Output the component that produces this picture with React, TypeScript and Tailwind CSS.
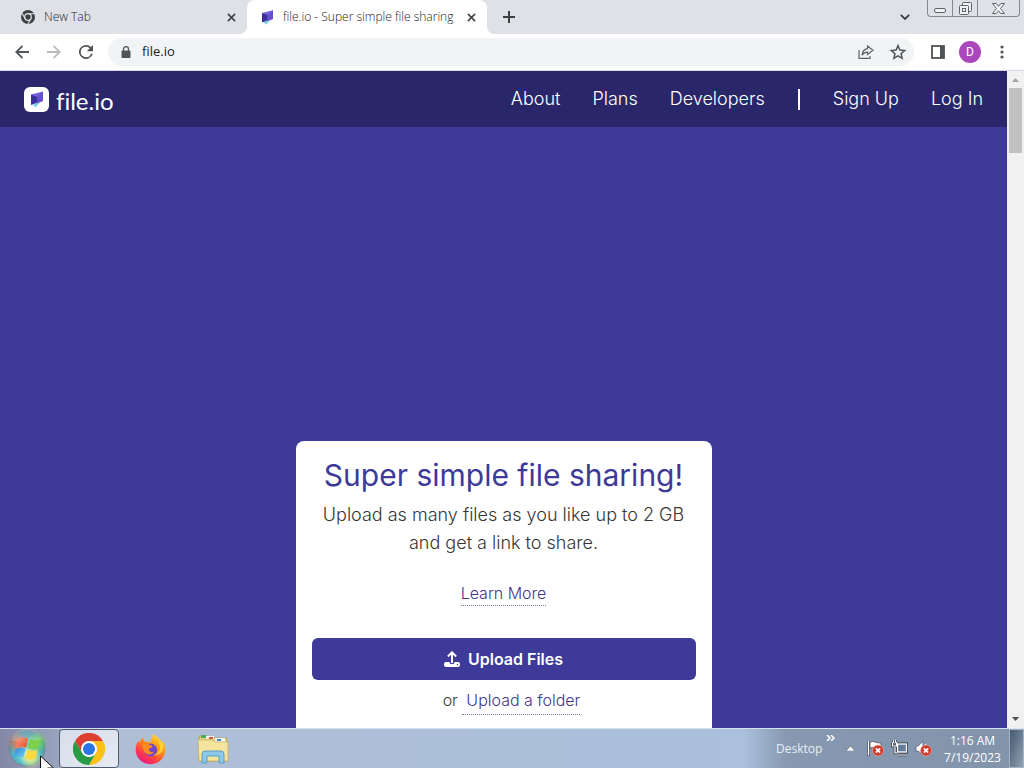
import type { ReactNode } from "react";

const ui = "font-['Open_Sans','Noto_Sans',sans-serif]";

function ChromeMark({ className = "" }: { className?: string }) {
  return (
    <svg viewBox="0 0 32 32" className={className} aria-hidden="true">
      <path d="M2.1 8A16 16 0 0 1 29.9 8H16a8 8 0 0 0-6.9 12z" fill="#dd3f31" />
      <path d="M29.9 8A16 16 0 0 1 16 32l6.9-12A8 8 0 0 0 16 8z" fill="#fbc116" />
      <path d="M16 32A16 16 0 0 1 2.1 8l7 12a8 8 0 0 0 13.800 0z" fill="#2a9a45" />
      <circle cx="16" cy="16" r="7.800" fill="#fff" />
      <circle cx="16" cy="16" r="6" fill="#2a74e4" />
    </svg>
  );
}

function ChromeMonoMark({ className = "" }: { className?: string }) {
  return (
    <svg viewBox="0 0 32 32" className={className} aria-hidden="true">
      <circle cx="16" cy="16" r="16" fill="#3c4043" />
      <circle cx="16" cy="16" r="7.500" fill="none" stroke="#dee1e6" strokeWidth="2.800" />
      <path d="M16 8.500h14M9.500 19.800l-7-12.100M22.500 19.800l-7 12.100" stroke="#dee1e6" strokeWidth="2.400" />
    </svg>
  );
}

function FileMark({ className = "" }: { className?: string }) {
  return (
    <svg viewBox="0 0 12 16" className={className} aria-hidden="true">
      <path d="M1 12l8-1-4.500 5z" fill="#7bd3ea" />
      <path d="M0 3 12 0v9.500L6 12z" fill="#7461dc" />
      <path d="M0 3 6 5.500V11l-6 2.500z" fill="#3b2f9b" />
      <path d="M6 5.500 12 0v9.500L6 11z" fill="#6350cc" />
    </svg>
  );
}

function Cross({ className = "" }: { className?: string }) {
  return (
    <svg viewBox="0 0 10 10" className={className} fill="none" stroke="#3c4043" strokeWidth="1.700" aria-hidden="true">
      <path d="M1 1l8 8M9 1 1 9" />
    </svg>
  );
}

function ToolButton({ label, children }: { label: string; children: ReactNode }) {
  return (
    <button type="button" aria-label={label} className="grid h-8 w-8 shrink-0 place-items-center">
      {children}
    </button>
  );
}

function TabStrip() {
  return (
    <div className={`${ui} flex h-[34px] shrink-0 bg-[#dee1e6] text-xs font-light text-[#202124]`}>
      <div className="flex w-[247px] items-center pr-2 pl-[21px]">
        <ChromeMonoMark className="h-[14px] w-[14px]" />
        <span className="ml-[9px] flex-1">New Tab</span>
        <button type="button" aria-label="Close New Tab" className="grid h-4 w-4 place-items-center">
          <Cross className="h-[9px] w-[9px]" />
        </button>
      </div>
      <div className="relative flex w-[240px] items-center rounded-t-lg bg-white pr-2 pl-[15px]">
        <span className="absolute bottom-0 -left-2 h-2 w-2 bg-[radial-gradient(circle_at_0_0,transparent_8px,white_8px)]" />
        <span className="absolute -right-2 bottom-0 h-2 w-2 bg-[radial-gradient(circle_at_100%_0,transparent_8px,white_8px)]" />
        <FileMark className="h-[15px] w-[11px]" />
        <span className="ml-[10px] flex-1 whitespace-nowrap">file.io - Super simple file sharing</span>
        <button type="button" aria-label="Close file.io" className="grid h-4 w-4 place-items-center">
          <Cross className="h-[9px] w-[9px]" />
        </button>
      </div>
      <button type="button" aria-label="New tab" className="ml-3 grid w-5 place-items-center">
        <svg viewBox="0 0 12 12" className="h-3 w-3" stroke="#3c4043" strokeWidth="2" aria-hidden="true">
          <path d="M6 0v12M0 6h12" />
        </svg>
      </button>
      <button type="button" aria-label="Search tabs" className="mr-3 ml-auto grid w-5 place-items-center">
        <svg viewBox="0 0 10 6" className="h-[6px] w-[10px]" fill="none" stroke="#3c4043" strokeWidth="1.800" aria-hidden="true">
          <path d="M.8.8 5 5 9.200.8" />
        </svg>
      </button>
      <div className="mr-1 flex h-[17px] w-[93px] rounded-b border border-t-0 border-[#85898f]">
        <button type="button" aria-label="Minimize" className="grid w-[25px] place-items-center border-r border-[#85898f]">
          <svg viewBox="0 0 12 12" className="h-3 w-3" fill="#f2f3f5" stroke="#5f6368" aria-hidden="true">
            <rect x=".5" y="6.500" width="11" height="4" rx="1.500" />
          </svg>
        </button>
        <button type="button" aria-label="Restore" className="grid w-[25px] place-items-center border-r border-[#85898f]">
          <svg viewBox="0 0 13 13" className="h-[13px] w-[13px]" fill="#eef0f2" stroke="#5f6368" aria-hidden="true">
            <rect x="3.500" y=".5" width="9" height="9" rx="1" />
            <rect x=".5" y="3.500" width="9" height="9" rx="1" />
            <rect x="3.500" y="6.500" width="3" height="3" />
          </svg>
        </button>
        <button type="button" aria-label="Close" className="grid flex-1 place-items-center">
          <svg viewBox="0 0 13 11" className="h-[11px] w-[13px]" fill="#f4f5f6" stroke="#5f6368" aria-hidden="true">
            <path d="M.5.5h3.700l2.300 2.800L8.800.5h3.700L8.500 5.500l4 5H8.800L6.500 7.700l-2.300 2.800H.5l4-5z" />
          </svg>
        </button>
      </div>
    </div>
  );
}

function Toolbar() {
  return (
    <div className={`${ui} flex h-[37px] shrink-0 items-center border-b border-[#d5d7e4] bg-white px-[6px]`}>
      <ToolButton label="Back">
        <svg viewBox="0 0 14 14" className="h-[14px] w-[14px]" fill="none" stroke="#505357" strokeWidth="1.800" aria-hidden="true">
          <path d="M14 7H1.500M7.500.8 1.300 7l6.200 6.200" />
        </svg>
      </ToolButton>
      <ToolButton label="Forward">
        <svg viewBox="0 0 14 14" className="h-[14px] w-[14px]" fill="none" stroke="#b9bbbe" strokeWidth="1.800" aria-hidden="true">
          <path d="M0 7h12.500M6.500.8 12.700 7l-6.200 6.200" />
        </svg>
      </ToolButton>
      <ToolButton label="Reload">
        <svg viewBox="4 4 16 16" className="h-[14px] w-[14px]" fill="#505357" aria-hidden="true">
          <path d="M17.650 6.350A8 8 0 1 0 19.730 14h-2.080A6 6 0 1 1 12 6c1.660 0 3.140.69 4.220 1.780L13 11h7V4z" />
        </svg>
      </ToolButton>
      <div className="ml-[6px] flex h-7 flex-1 items-center rounded-full bg-[#f1f3f4] pl-[13px]">
        <svg viewBox="0 0 10 13" className="h-[13px] w-[10px]" fill="#505357" aria-hidden="true">
          <rect x=".5" y="4.500" width="9" height="7.500" rx="1" />
          <path d="M2.500 5V3.200a2.500 2.500 0 0 1 5 0V5" fill="none" stroke="#505357" strokeWidth="1.300" />
        </svg>
        <input
          aria-label="Address"
          defaultValue="file.io"
          className="ml-[11px] min-w-0 flex-1 bg-transparent text-[13px] text-[#202124] outline-none"
        />
        <ToolButton label="Share">
          <svg viewBox="0 0 16 14" className="h-[14px] w-4" fill="none" stroke="#5f6368" strokeWidth="1.200" aria-hidden="true">
            <path d="M1 5v8.300h11V11M9.500 1l5.500 4.300-5.500 4.200V7.200C7 7.200 5.300 8 4 10.200c.3-3.500 2.200-6 5.500-6.600z" />
          </svg>
        </ToolButton>
        <ToolButton label="Bookmark">
          <svg viewBox="0 0 24 24" className="h-[18px] w-[18px]" fill="none" stroke="#505357" strokeWidth="2" aria-hidden="true">
            <path d="m12 3.500 2.500 5.900 6.400.6-4.800 4.200 1.400 6.200-5.500-3.300-5.500 3.300 1.400-6.200L3.100 10l6.400-.6z" />
          </svg>
        </ToolButton>
      </div>
      <div className="ml-2 flex">
        <ToolButton label="Side panel">
          <svg viewBox="0 0 14 14" className="h-[14px] w-[14px]" aria-hidden="true">
            <rect x="1" y="1" width="12" height="12" fill="#fff" stroke="#505357" strokeWidth="1.800" />
            <path d="M9 1h4v12H9z" fill="#505357" />
          </svg>
        </ToolButton>
        <ToolButton label="Profile D">
          <span className="grid h-[22px] w-[22px] place-items-center rounded-full bg-[#ab47bc] font-['Roboto',sans-serif] text-xs text-white">D</span>
        </ToolButton>
        <ToolButton label="More">
          <svg viewBox="0 0 4 14" className="h-[14px] w-1" fill="#505357" aria-hidden="true">
            <circle cx="2" cy="2" r="1.600" />
            <circle cx="2" cy="7" r="1.600" />
            <circle cx="2" cy="12" r="1.600" />
          </svg>
        </ToolButton>
      </div>
    </div>
  );
}

function SiteHeader() {
  return (
    <header className="flex h-14 shrink-0 items-center justify-between bg-[#29276a] px-6 text-white">
      <a href="#home" className="flex items-center gap-[7px]">
        <span className="grid h-[25px] w-[25px] place-items-center rounded-md bg-white">
          <FileMark className="h-[17px] w-3" />
        </span>
        <span className="pt-1 font-['Lato',sans-serif] text-2xl leading-7 font-normal [font-variant-ligatures:none]">file.io</span>
      </a>
      <nav className="flex items-center gap-8 text-lg leading-7 font-light">
        <a href="#about">About</a>
        <a href="#plans">Plans</a>
        <a href="#developers">Developers</a>
        <span className="mx-px h-[21px] w-[2px] bg-white" />
        <a href="#signup">Sign Up</a>
        <a href="#login">Log In</a>
      </nav>
    </header>
  );
}

function UploadCard() {
  return (
    <section className="w-full max-w-[416px] shrink-0 rounded-t-lg bg-white px-4 pt-[14px] pb-8 text-center font-light text-[#363636]">
      <h1 className="text-3xl leading-10 font-normal whitespace-nowrap text-[#3d3a99]">Super simple file sharing!</h1>
      <p className="mt-[6px] text-lg leading-7">
        Upload as many files as you like up to 2 GB
        <br />
        and get a link to share.
      </p>
      <a href="#more" className="mt-6 inline-block border-b border-dotted border-[#77759f] leading-6 text-[#44358c]">
        Learn More
      </a>
      <button type="button" className="mt-8 flex h-[42px] w-full items-center justify-center gap-2 rounded-md bg-[#3d3a99] font-semibold text-white">
        <svg viewBox="0 0 16 16" className="h-4 w-4" fill="none" stroke="#fff" aria-hidden="true">
          <path d="M8 12V2M3.800 5.500 8 1.300l4.200 4.200" strokeWidth="1.900" />
          <path d="M2 11h3.500c0 3 5 3 5 0H14a2 2 0 0 1 2 2v1a2 2 0 0 1-2 2H2a2 2 0 0 1-2-2v-1a2 2 0 0 1 2-2z" fill="#fff" stroke="none" />
          <circle cx="13.500" cy="13.500" r=".7" fill="#3d3a99" stroke="none" />
        </svg>
        Upload Files
      </button>
      <p className="mt-2 pl-4 leading-6">
        or{" "}
        <a href="#folder" className="inline-block border-b border-dotted border-[#77759f] pb-[2px] pl-1 text-[#44358c]">
          Upload a folder
        </a>
      </p>
    </section>
  );
}

function ScrollBar() {
  return (
    <div className="flex w-[17px] shrink-0 flex-col items-center bg-[#f1f1f1]">
      <svg viewBox="0 0 17 17" className="h-[17px] w-[17px]" fill="#a3a3a3" aria-hidden="true">
        <path d="M5 11h7L8.500 7z" />
      </svg>
      <div className="h-[65px] w-[13px] bg-[#c1c1c1]" />
      <svg viewBox="0 0 17 17" className="mt-auto h-[17px] w-[17px]" fill="#505050" aria-hidden="true">
        <path d="M5 6h7l-3.500 4z" />
      </svg>
    </div>
  );
}

function ErrorBadge() {
  return (
    <g>
      <circle cx="11" cy="10.500" r="5.500" fill="#d2382c" stroke="#f0b1aa" strokeWidth=".6" />
      <path d="m8.800 8.300 4.400 4.400m0-4.400-4.400 4.400" stroke="#fff" strokeWidth="1.700" />
    </g>
  );
}

function Taskbar() {
  return (
    <footer className={`${ui} flex h-10 shrink-0 border-t border-[#d5e1ef] text-xs text-white`}>
      <div className="flex min-w-0 flex-1 bg-linear-to-r from-[#8388a6] via-[#afbed5] via-15% to-[#aac0dc]">
        <button type="button" aria-label="Start" className="w-[59px]">
          <svg viewBox="0 0 59 39" className="h-full w-full" aria-hidden="true">
            <defs>
              <radialGradient id="orb" cx=".5" cy=".65" r=".7">
                <stop offset="0" stopColor="#c9f5dc" />
                <stop offset=".4" stopColor="#58c4cc" />
                <stop offset=".8" stopColor="#4d91a4" />
                <stop offset="1" stopColor="#66819d" />
              </radialGradient>
              <linearGradient id="paneRed" x1="0" y1="0" x2="1" y2="1">
                <stop offset="0" stopColor="#f7a184" />
                <stop offset="1" stopColor="#e84b22" />
              </linearGradient>
              <linearGradient id="paneBlue" x1="0" y1="0" x2="1" y2="1">
                <stop offset="0" stopColor="#3181d3" />
                <stop offset="1" stopColor="#6dd3f6" />
              </linearGradient>
              <radialGradient id="glowRed">
                <stop offset="0" stopColor="#ff7048" />
                <stop offset="1" stopColor="#ff7048" stopOpacity="0" />
              </radialGradient>
              <radialGradient id="glowGreen">
                <stop offset="0" stopColor="#6fe04a" />
                <stop offset="1" stopColor="#6fe04a" stopOpacity="0" />
              </radialGradient>
              <radialGradient id="glowYellow">
                <stop offset="0" stopColor="#fff070" />
                <stop offset="1" stopColor="#fff070" stopOpacity="0" />
              </radialGradient>
            </defs>
            <circle cx="27" cy="19" r="18" fill="url(#orb)" stroke="#6e8798" />
            <circle cx="18" cy="14" r="11" fill="url(#glowRed)" />
            <circle cx="37" cy="13" r="11" fill="url(#glowGreen)" />
            <circle cx="31" cy="29" r="11" fill="url(#glowYellow)" />
            <path d="M11 11a17 17 0 0 1 32 0q-16 6-32 0" fill="#fff" opacity=".2" />
            <path d="M18 10q5-3 10-.5L26 18.500q-5-2-10 .5z" fill="url(#paneRed)" />
            <path d="M30 10q5 3 11 0l-3 9q-5 3-10 0z" fill="#7ed04b" />
            <path d="M15.500 20.500q5-3 10-.5l-2 8.500q-5-2-10 .5z" fill="url(#paneBlue)" />
            <path d="M27.500 20.500q5 3 10 0l-2 8.500q-5 3-10 0z" fill="#fdd83c" />
            <path d="M40.500 27v17l4-4 3 6 3-2-3-5h6z" fill="#fff" stroke="#111" />
          </svg>
        </button>
        <button type="button" aria-label="Google Chrome" className="grid w-[60px] place-items-center rounded-sm border border-[#4c5b70] bg-linear-to-br from-[#d6deea] to-[#e6eaf2]">
          <ChromeMark className="h-8 w-8" />
        </button>
        <button type="button" aria-label="Firefox" className="grid w-[62px] place-items-center">
          <svg viewBox="0 0 32 32" className="h-8 w-8" aria-hidden="true">
            <defs>
              <linearGradient id="fox" x1=".9" y1="0" x2=".25" y2="1">
                <stop offset="0" stopColor="#fff04a" />
                <stop offset=".4" stopColor="#ff980e" />
                <stop offset=".75" stopColor="#ff3b4b" />
                <stop offset="1" stopColor="#e31587" />
              </linearGradient>
            </defs>
            <path d="M20 1c1 2 5 4 7 7 1 1 1 2 1.300 3 .6-1 .6-2 .4-3C33 14 32 22 27 27c-6 6-16 5-21 0C0 21 1 12 4.500 7.500c0 1 .2 2 .8 2.500C6 8 7.500 5.500 9.500 4.500c0 2 .8 3.500 2 4.500 2-.6 4 0 5.500 1 0-3 1-7 3-9z" fill="url(#fox)" />
            <circle cx="16.500" cy="17" r="6.500" fill="#7046c8" />
            <path d="M7.500 12c3-2 6-2 8.500 0 1.500 0 2.500.5 2.500 1.500 0 1-2.500 1.500-3.500 2.500-.5 2 2 4 5 2.500-1.500 3.500-7 4-9.500.5-1.500-2-1.500-5-3-7z" fill="#ff8a1d" />
            <path d="M20 1c1 4 6 6 6 13 0 5-4 8-7 8 7 1 11-4 10-11-1-5-7-6-9-10z" fill="#ffcf36" />
          </svg>
        </button>
        <button type="button" aria-label="File Explorer" className="grid w-[64px] place-items-center">
          <svg viewBox="0 0 32 30" className="h-[30px] w-8" aria-hidden="true">
            <path d="M2 2h10l2 2h16v23H2z" fill="#e6cf79" stroke="#b29c50" strokeWidth=".8" />
            <path d="M4 1h5v3H4z" fill="#50a95c" />
            <path d="M9 2h8v3H9z" fill="#f5f5ee" />
            <path d="M12 3h4v2h-4z" fill="#cf5840" />
            <path d="M18 4h10v4H18z" fill="#f5f5ee" />
            <path d="M20 5h4v2h-4z" fill="#3b87bf" />
            <path d="M1 6h15l2 2h13v19H2z" fill="#f5e49d" stroke="#c4ac5c" strokeWidth=".7" />
            <path d="M5 29v-9q0-3 3-3h16q3 0 3 3v9h-5v-7H10v7z" fill="#8bc9ea" stroke="#5499c3" strokeWidth=".9" />
          </svg>
        </button>
      </div>
      <div className="flex w-[280px] items-center bg-linear-to-r from-[#aac0dc] via-[#8799b1] via-15% to-[#8294aa]">
        <span className="ml-8 w-11 text-[#e8edf4]">Desktop</span>
        <button type="button" aria-label="More desktop items" className="ml-[6px] self-start pt-[6px]">
          <svg viewBox="0 0 9 6" className="h-[6px] w-[9px]" fill="none" stroke="#fff" strokeWidth="1.500" aria-hidden="true">
            <path d="m1 0 3 3-3 3M5 0l3 3-3 3" />
          </svg>
        </button>
        <button type="button" aria-label="Show hidden icons" className="ml-[11px]">
          <svg viewBox="0 0 9 5" className="h-[5px] w-[9px]" fill="#fff" stroke="#56667a" strokeWidth=".5" aria-hidden="true">
            <path d="M0 5h9L4.500 0z" />
          </svg>
        </button>
        <div className="ml-3 flex gap-[7px]">
          <svg viewBox="0 0 17 17" className="h-[17px] w-[17px]" role="img" aria-label="Action Center">
            <path d="M1.500 1v15" stroke="#333d4b" strokeWidth="3" />
            <path d="M1.500 1v14.500" stroke="#fff" strokeWidth="1.500" />
            <path d="M3 2q3-1 5 0t6 1v6q-3 0-6-1T3 8z" fill="#fff" stroke="#3b4657" strokeWidth=".7" />
            <ErrorBadge />
          </svg>
          <svg viewBox="0 0 17 17" className="h-[17px] w-[17px]" role="img" aria-label="Network">
            <path d="M7 15h8M4 7v6h3M1.500 2v4h4V2M2.500 0v3m2-3v3" fill="none" stroke="#2c3644" strokeWidth="2.600" />
            <rect x="6.500" y="4" width="9" height="8" fill="#667b98" stroke="#2c3644" strokeWidth="3" />
            <rect x="6.500" y="4" width="9" height="8" fill="#667b98" stroke="#fff" strokeWidth="1.300" />
            <path d="M7 15h8M4 7v6h3M1.500 2v4h4V2M2.500 0v3m2-3v3" fill="none" stroke="#fff" strokeWidth="1.200" />
          </svg>
          <svg viewBox="0 0 17 17" className="h-[17px] w-[17px]" role="img" aria-label="Volume muted">
            <path d="M1 6h2l5-4.500v13L3 11H1z" fill="#fff" stroke="#4b5868" strokeWidth=".7" />
            <path d="M10 4q3 4 0 8" fill="none" stroke="#fff" strokeWidth="1.200" />
            <ErrorBadge />
          </svg>
        </div>
        <div className="flex-1 pl-1 text-center leading-[17px] whitespace-nowrap">
          1:16 AM
          <br />
          7/19/2023
        </div>
        <button type="button" aria-label="Show desktop" className="h-full w-[15px] border border-[#a5b4c5] bg-linear-to-br from-[#465a70] to-[#8fa1b4]" />
      </div>
    </footer>
  );
}

export default function App() {
  return (
    <div className="flex h-screen flex-col overflow-hidden">
      <TabStrip />
      <Toolbar />
      <div className="flex min-h-0 flex-1 font-['Inter',sans-serif]">
        <div className="flex min-w-0 flex-1 flex-col overflow-hidden bg-[#3d3a99]">
          <SiteHeader />
          <main className="flex justify-center pt-[314px]">
            <UploadCard />
          </main>
        </div>
        <ScrollBar />
      </div>
      <Taskbar />
    </div>
  );
}
